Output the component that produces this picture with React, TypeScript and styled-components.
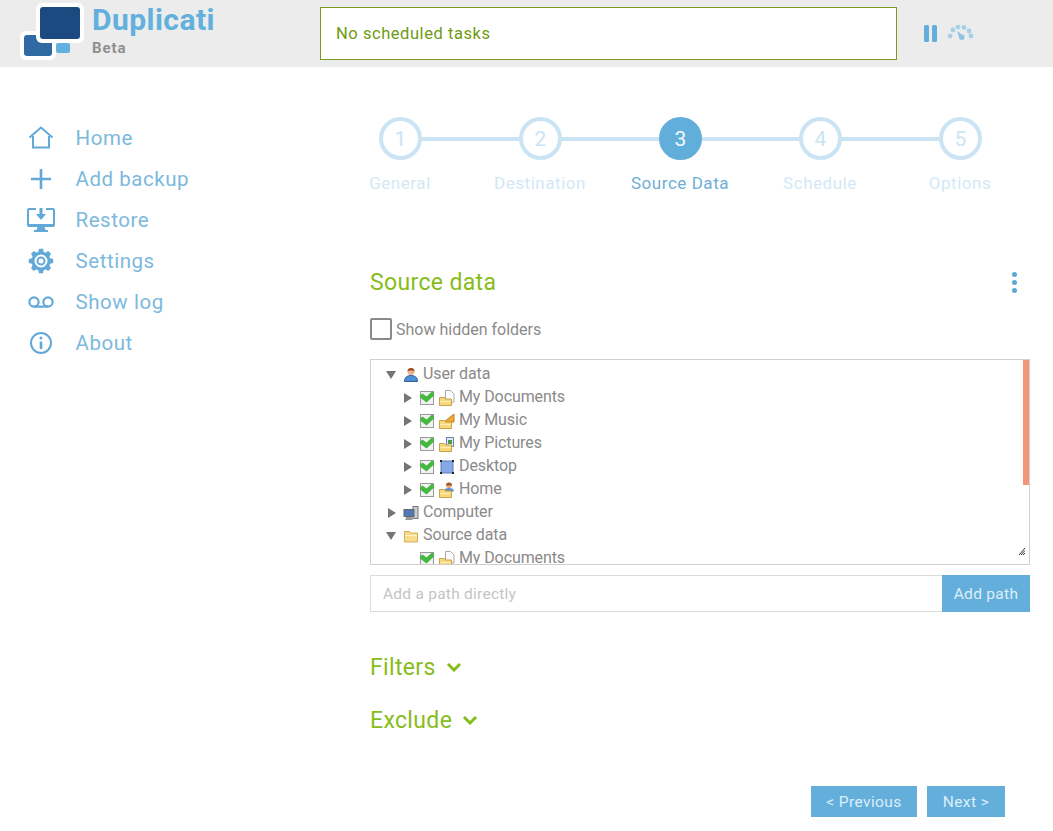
import React from "react";
import styled, { createGlobalStyle } from "styled-components";

const Global = createGlobalStyle`
  html, body { margin: 0; padding: 0; background: #fff; }
  body { font-family: Roboto, "Liberation Sans", sans-serif; }
  * { box-sizing: border-box; }
`;

const Page = styled.div`width: 1053px; height: 831px; overflow: hidden; display: flex; flex-direction: column;`;
const Header = styled.header`height: 67px; background: #ececec; display: flex; align-items: flex-start; flex: none;`;
const LogoBox = styled.div`width: 92px; height: 67px; flex: none; display: flex;`;
const Brand = styled.div`width: 228px; flex: none; display: flex; flex-direction: column; padding-top: 1px;`;
const BrandName = styled.div`font-size: 30px; line-height: 38px; font-weight: 700; color: #62b0dc; letter-spacing: 0.45px;`;
const BrandSub = styled.div`font-size: 15px; line-height: 19px; font-weight: 700; color: #8f8f8f; letter-spacing: 0.9px;`;
const Status = styled.div`margin-top: 7px; width: 577px; height: 53px; background: #fff; border: 1px solid #7a9a1e; color: #6f9a12; font-size: 16.500px; letter-spacing: 0.55px; display: flex; align-items: center; padding-left: 15px;`;
const Controls = styled.div`margin: 25px 0 0 27px; display: flex; gap: 10px; align-items: flex-start;`;

const Body = styled.div`display: flex; flex: 1;`;
const Sidebar = styled.nav`width: 330px; flex: none; padding: 50px 0 0 21px; display: flex; flex-direction: column;`;
const NavItem = styled.div`height: 41px; display: flex; align-items: center; gap: 14.500px; color: #7cb9dd; font-size: 20.500px; letter-spacing: 0.55px;`;
const NavIcon = styled.span`width: 40px; height: 30px; display: flex; align-items: center; justify-content: center; flex: none;`;

const Main = styled.main`flex: 1; padding-top: 50px; display: flex; flex-direction: column;`;
const StepCircles = styled.div`display: flex; align-items: center; padding-left: 49px; width: 700px;`;
const Circle = styled.div<{ $active?: boolean }>`
  width: 43px; height: 43px; border-radius: 50%; flex: none; display: flex; align-items: center; justify-content: center;
  font-size: 21px; border: 4px solid ${p => (p.$active ? "#62aedb" : "#cbe4f4")};
  background: ${p => (p.$active ? "#62aedb" : "#fff")}; color: ${p => (p.$active ? "#f2f9fd" : "#cbe4f4")};
`;
const Connector = styled.div`width: 97px; height: 4px; margin-top: 1px; background: #cbe4f4; flex: none;`;
const StepLabels = styled.div`display: grid; grid-template-columns: repeat(5, 140px); margin-top: 11px;`;
const StepLabel = styled.div<{ $active?: boolean }>`text-align: center; font-size: 17px; letter-spacing: 0.55px; line-height: 24px; color: ${p => (p.$active ? "#6eaed6" : "#d3e8f5")};`;

const Form = styled.div`margin: 72px 0 0 40px; width: 660px; display: flex; flex-direction: column;`;
const HeadingRow = styled.div`display: flex; align-items: center; justify-content: space-between; height: 30px; padding-right: 13px;`;
const Heading = styled.h2`margin: 2px 0 0; font-size: 23px; letter-spacing: 0.35px; font-weight: 400; color: #86bd1a; line-height: 30px;`;
const Kebab = styled.div`display: flex; flex-direction: column; gap: 3px;`;
const Dot = styled.span`width: 5px; height: 5px; border-radius: 50%; background: #5ea5d6;`;
const CheckRow = styled.label`display: flex; align-items: center; gap: 4px; margin-top: 21px; height: 22px; font-size: 16px; color: #8a8a8a;`;
const CheckOutline = styled.span`width: 22px; height: 22px; border: 2px solid #8a8a8a; border-radius: 2px; flex: none;`;

const TreeWrap = styled.div`position: relative; margin-top: 19px; height: 206px; border: 1px solid #d0d0d0;`;
const TreeBox = styled.div`height: 100%; overflow: hidden; padding-top: 2px;`;
const Thumb = styled.div`position: absolute; top: 0; right: 0; width: 6px; height: 125px; background: #f0967a;`;
const Grip = styled.svg`position: absolute; right: 4px; bottom: 9px;`;
const Row = styled.div<{ $level: number }>`height: 23px; display: flex; align-items: center; padding-left: ${p => 12 + p.$level * 16}px; font-size: 16px; letter-spacing: -0.1px; color: #8a8a8a; white-space: nowrap;`;
const Arrow = styled.span<{ $open?: boolean; $none?: boolean }>`
  margin-top: 2px; width: 16px; height: 16px; flex: none; display: flex; align-items: center; justify-content: center;
  &::before {
    content: ""; display: ${p => (p.$none ? "none" : "block")}; width: 0; height: 0;
    ${p => p.$open
      ? "border-left: 5px solid transparent; border-right: 5px solid transparent; border-top: 8px solid #757575;"
      : "margin-left: 1px; border-top: 5px solid transparent; border-bottom: 5px solid transparent; border-left: 8px solid #757575;"}
  }
`;
const Check = styled.span`margin: 2px 0 0 5px; width: 14px; height: 14px; flex: none; display: flex;`;
const Glyph = styled.span<{ $first?: boolean }>`margin: 2px 4px 0 ${p => (p.$first ? 4 : 5)}px; width: 16px; height: 16px; flex: none; display: flex;`;

const PathRow = styled.div`margin-top: 10px; display: flex; height: 37px;`;
const PathInput = styled.div`flex: 1; border: 1px solid #dcdcdc; border-right: none; padding-left: 12px; display: flex; align-items: center; color: #c4c4c4; font-size: 15.500px; letter-spacing: 0.25px;`;
const PathButton = styled.div`width: 88px; background: #64aedc; color: #dcEefa; display: flex; align-items: center; justify-content: center; font-size: 15.500px; letter-spacing: 0.3px;`;
const Collapse = styled.div<{ $gap: number }>`margin-top: ${p => p.$gap}px; height: 30px; display: flex; align-items: center; gap: 10px; color: #86bd1a; font-size: 23px; letter-spacing: 0.35px;`;
const Footer = styled.div`margin-top: 51px; padding-right: 25px; display: flex; justify-content: flex-end; gap: 10px;`;
const NavButton = styled.div<{ $w: number }>`width: ${p => p.$w}px; height: 31px; background: #64aedc; color: #dcEefa; display: flex; align-items: center; justify-content: center; font-size: 15.500px; letter-spacing: 0.4px;`;

const Logo = () => (
  <svg width="92" height="67" viewBox="0 0 92 67">
    <rect x="56" y="43" width="14" height="10" rx="2" fill="#62b0e0" />
    <rect x="20" y="31" width="36" height="29" rx="6" fill="#fff" />
    <rect x="24" y="35" width="28" height="21" rx="3" fill="#2f6aa3" />
    <rect x="36" y="3" width="48" height="40" rx="6" fill="#fff" />
    <rect x="40" y="7" width="40" height="32" rx="3" fill="#1c4a80" />
  </svg>
);

const Pause = () => (
  <svg width="13" height="18" viewBox="0 0 13 18">
    <rect x="0" y="0" width="5" height="17" rx="1.500" fill="#62aedb" />
    <rect x="8" y="0" width="5" height="17" rx="1.500" fill="#62aedb" />
  </svg>
);

const Gauge = () => (
  <svg width="27" height="16" viewBox="0 0 27 16" fill="#a6cfe8">
    <circle cx="3" cy="11" r="2.400" />
    <circle cx="6" cy="5" r="2.400" />
    <circle cx="11" cy="2" r="2.400" />
    <circle cx="17" cy="2.400" r="2.400" />
    <circle cx="22" cy="6" r="2.400" />
    <circle cx="24" cy="11" r="2.400" />
    <path d="M10 6l5 3.500a2.800 2.800 0 1 1-3 2.600z" fill="#8fc3e2" />
  </svg>
);

const stroke = "#62a9d8";
const HomeIcon = () => (
  <svg width="26" height="24" viewBox="0 0 26 24" fill="none" stroke={stroke} strokeWidth="2">
    <path d="M1.500 11.500 13 1.500l11.500 10M5 10v11.500h16V10" />
  </svg>
);
const PlusIcon = () => (
  <svg width="22" height="22" viewBox="0 0 22 22" fill="none" stroke={stroke} strokeWidth="2.600">
    <path d="M1 11h20M11 1v20" />
  </svg>
);
const RestoreIcon = () => (
  <svg width="28" height="26" viewBox="0 0 28 26">
    <path d="M9 2H2a1 1 0 0 0-1 1v15a1 1 0 0 0 1 1h24a1 1 0 0 0 1-1V3a1 1 0 0 0-1-1h-7" fill="none" stroke={stroke} strokeWidth="2" />
    <path d="M12.500 1h3v6H19l-5 6-5-6h3.500z" fill={stroke} />
    <path d="M1 17h26v3H1zM10.500 20h7l1 3h2.500v2H7v-2h2.500z" fill={stroke} />
  </svg>
);
const GearIcon = () => (
  <svg width="26" height="26" viewBox="0 0 26 26">
    <g fill={stroke}>
      {[0, 45, 90, 135, 180, 225, 270, 315].map(a => (
        <path key={a} d="M10 5 11 .8h4L16 5z" transform={`rotate(${a} 13 13)`} />
      ))}
    </g>
    <circle cx="13" cy="13" r="8" fill="none" stroke={stroke} strokeWidth="3" />
    <circle cx="13" cy="13" r="3.500" fill="none" stroke={stroke} strokeWidth="2" />
  </svg>
);
const LogIcon = () => (
  <svg width="26" height="12" viewBox="0 0 26 12" fill="none" stroke={stroke} strokeWidth="2.200">
    <circle cx="6" cy="6" r="4.600" />
    <circle cx="20" cy="6" r="4.600" />
    <path d="M6 10.600h14" />
  </svg>
);
const InfoIcon = () => (
  <svg width="24" height="24" viewBox="0 0 24 24" fill="none" stroke={stroke} strokeWidth="2">
    <circle cx="12" cy="12" r="10" />
    <path d="M12 10.500V18" strokeWidth="2.600" />
    <circle cx="12" cy="7" r="1.500" fill={stroke} stroke="none" />
  </svg>
);

const CheckGlyph = () => (
  <svg width="14" height="14" viewBox="0 0 14 14">
    <rect x="0.500" y="0.500" width="13" height="13" fill="#f2f2f2" stroke="#9a9a9a" />
    <path d="M0 4.500l2.500-2 4 3L12 .5l2 1.500v2.500L6.500 11.500 0 6.500z" fill="#45b83f" />
  </svg>
);
const Folder = ({ extra }: { extra?: React.ReactNode }) => (
  <svg width="16" height="16" viewBox="0 0 16 16">
    {extra}
    <path d="M.5 7.500h5l1 1.500h6v6.500H.5z" fill="#f7d87c" stroke="#c9a24a" />
    <path d="M1.500 11h10v1h-10z" fill="#fdf0bd" />
  </svg>
);
const Doc = <path d="M6.500.5h5l3.500 3.500v8H6.500z" fill="#fff" stroke="#a8a8a8" />;
const Music = <path d="M5 9 15 1v8z" fill="#f2a93b" stroke="#c67e1f" />;
const Pic = <g><rect x="7.500" y="1.500" width="7" height="9" fill="#dfe9f5" stroke="#6d86a8" /><rect x="9" y="4" width="4" height="4" fill="#4f9a4a" /></g>;
const Person = (
  <g>
    <circle cx="10" cy="3.500" r="2.800" fill="#e8a97e" />
    <path d="M10 .5a3 3 0 0 1 3 3H7a3 3 0 0 1 3-3z" fill="#a0522d" />
    <path d="M5 9.500c0-2.500 2-3.500 5-3.500s5 1 5 3.500z" fill="#5b8fd0" />
  </g>
);
const DesktopIcon = () => (
  <svg width="16" height="16" viewBox="0 0 16 16">
    <rect x="2" y="2" width="12" height="12" fill="#86a8e4" stroke="#5a7cc0" />
    <g fill="#222">
      <rect x="1" y="1" width="2" height="2" /><rect x="13" y="1" width="2" height="2" />
      <rect x="1" y="13" width="2" height="2" /><rect x="13" y="13" width="2" height="2" />
    </g>
  </svg>
);
const UserIcon = () => (
  <svg width="16" height="16" viewBox="0 0 16 16">
    <circle cx="8" cy="4.500" r="3.500" fill="#eab38c" />
    <path d="M4.500 4.500a3.500 3.500 0 0 1 7 0c-1-1.500-6-1.500-7 0z" fill="#9a4d22" />
    <path d="M1.500 14.500c0-4 2.500-6 6.500-6s6.500 2 6.500 6z" fill="#4d8fd6" stroke="#2f5f9d" />
  </svg>
);
const ComputerIcon = () => (
  <svg width="16" height="16" viewBox="0 0 16 16">
    <rect x="10" y="1.500" width="5" height="12" fill="#c9ced5" stroke="#777" />
    <rect x="1" y="4.500" width="10" height="7" fill="#4f78b8" stroke="#666" />
    <path d="M3 12h6v1H9l1 2H2l1-2z" fill="#999" />
  </svg>
);
const PlainFolder = () => (
  <svg width="16" height="16" viewBox="0 0 16 16">
    <path d="M1.500 3.500h5l1 1.500h7v9h-13z" fill="#f7dc8a" stroke="#d3af5c" />
    <path d="M2.500 7h11v1h-11z" fill="#fdf3c8" />
  </svg>
);
const Chevron = () => (
  <svg width="16" height="10" viewBox="0 0 16 10" fill="none" stroke="#86bd1a" strokeWidth="3"><path d="M2 2l6 6 6-6" /></svg>
);

const nav: [React.ReactNode, string][] = [
  [<HomeIcon />, "Home"], [<PlusIcon />, "Add backup"], [<RestoreIcon />, "Restore"],
  [<GearIcon />, "Settings"], [<LogIcon />, "Show log"], [<InfoIcon />, "About"],
];
const steps = ["General", "Destination", "Source Data", "Schedule", "Options"];

const Child = ({ icon, label, arrow = true }: { icon: React.ReactNode; label: string; arrow?: boolean }) => (
  <Row $level={1}>
    <Arrow $none={!arrow} />
    <Check><CheckGlyph /></Check>
    <Glyph>{icon}</Glyph>
    {label}
  </Row>
);
const Root = ({ icon, label, open }: { icon: React.ReactNode; label: string; open?: boolean }) => (
  <Row $level={0}>
    <Arrow $open={open} />
    <Glyph $first>{icon}</Glyph>
    {label}
  </Row>
);

export default function App() {
  return (
    <Page>
      <Global />
      <Header>
        <LogoBox><Logo /></LogoBox>
        <Brand>
          <BrandName>Duplicati</BrandName>
          <BrandSub>Beta</BrandSub>
        </Brand>
        <Status>No scheduled tasks</Status>
        <Controls><Pause /><Gauge /></Controls>
      </Header>
      <Body>
        <Sidebar>
          {nav.map(([icon, label]) => (
            <NavItem key={label}><NavIcon>{icon}</NavIcon>{label}</NavItem>
          ))}
        </Sidebar>
        <Main>
          <StepCircles>
            {steps.map((s, i) => (
              <React.Fragment key={s}>
                <Circle $active={i === 2}>{i + 1}</Circle>
                {i < 4 && <Connector />}
              </React.Fragment>
            ))}
          </StepCircles>
          <StepLabels>
            {steps.map((s, i) => <StepLabel key={s} $active={i === 2}>{s}</StepLabel>)}
          </StepLabels>
          <Form>
            <HeadingRow>
              <Heading>Source data</Heading>
              <Kebab><Dot /><Dot /><Dot /></Kebab>
            </HeadingRow>
            <CheckRow><CheckOutline />Show hidden folders</CheckRow>
            <TreeWrap>
              <TreeBox>
                <Root icon={<UserIcon />} label="User data" open />
                <Child icon={<Folder extra={Doc} />} label="My Documents" />
                <Child icon={<Folder extra={Music} />} label="My Music" />
                <Child icon={<Folder extra={Pic} />} label="My Pictures" />
                <Child icon={<DesktopIcon />} label="Desktop" />
                <Child icon={<Folder extra={Person} />} label="Home" />
                <Root icon={<ComputerIcon />} label="Computer" />
                <Root icon={<PlainFolder />} label="Source data" open />
                <Child icon={<Folder extra={Doc} />} label="My Documents" arrow={false} />
              </TreeBox>
              <Thumb />
              <Grip width="6" height="7" viewBox="0 0 6 7" fill="none" stroke="#333" strokeWidth="1">
                <path d="M0 7 6 0M2 7l4-4.500M4 7l2-2" />
              </Grip>
            </TreeWrap>
            <PathRow>
              <PathInput>Add a path directly</PathInput>
              <PathButton>Add path</PathButton>
            </PathRow>
            <Collapse $gap={40}>Filters<Chevron /></Collapse>
            <Collapse $gap={23}>Exclude<Chevron /></Collapse>
            <Footer>
              <NavButton $w={106}>&lt; Previous</NavButton>
              <NavButton $w={78}>Next &gt;</NavButton>
            </Footer>
          </Form>
        </Main>
      </Body>
    </Page>
  );
}
